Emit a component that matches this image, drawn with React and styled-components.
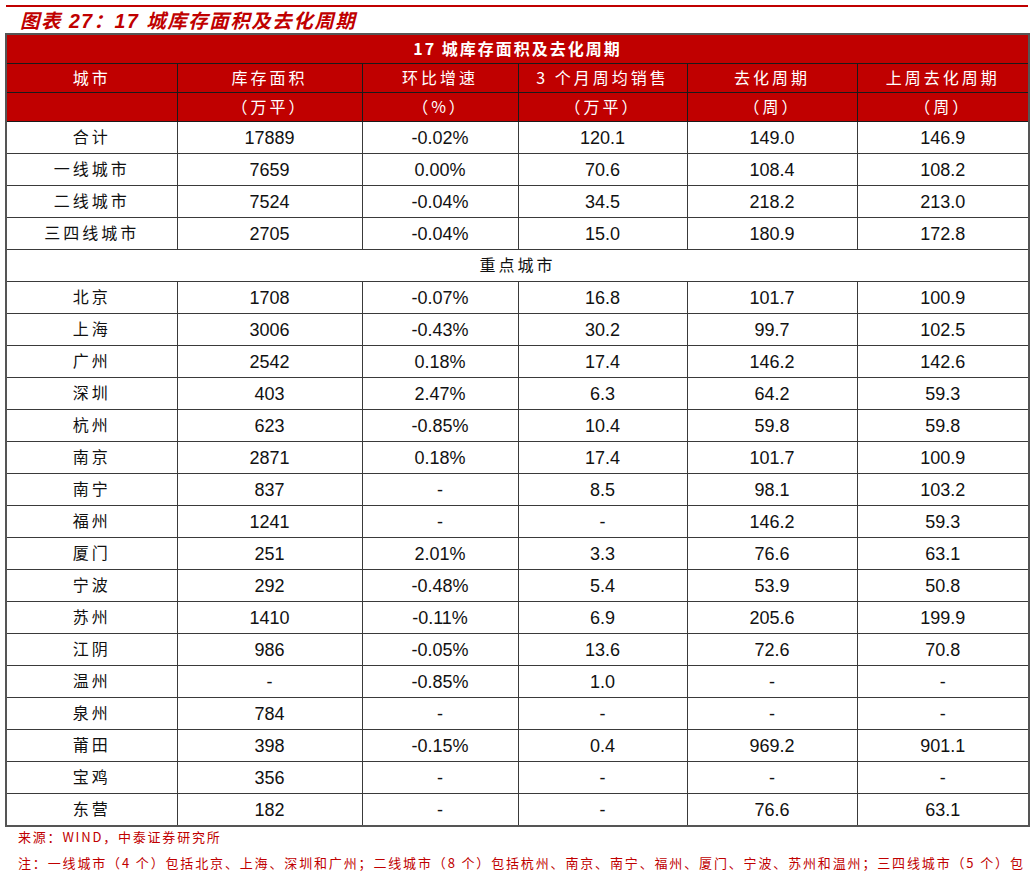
import styled, { createGlobalStyle } from "styled-components";

const GlobalStyle = createGlobalStyle`
    html, body {
        margin: 0;
        padding: 0;
        background: #ffffff;
    }
    body {
        font-family: "Liberation Sans", "Noto Sans CJK SC", sans-serif;
    }
`

const RED = "#c00000";
const CJK = `"Noto Sans CJK SC", "Liberation Sans", sans-serif`;

const Page = styled.div`
    width: 1033px;
    padding: 5px 5px 0 5px;
    box-sizing: border-box;
`
const TopRule = styled.div`
    height: 2px;
    margin: 0 0 0 1px;
    background: ${RED};
`
const Caption = styled.h1`
    margin: 2px 0 0 15px;
    height: 24px;
    font-family: "Liberation Sans", "Noto Sans CJK SC", sans-serif;
    font-style: italic;
    font-weight: 700;
    font-size: 19.5px;
    line-height: 24px;
    color: ${RED};
    letter-spacing: 1.5px;
`
const Table = styled.table`
    width: 1023px;
    border-collapse: collapse;
    table-layout: fixed;
    border: 2px solid #555555;
`
// CJK cells get a small bottom padding so their glyphs sit a bit higher, like the source
const Cell = styled.td`
    height: ${p => (p.$h || 31) - (p.$num ? 0 : 3)}px;
    padding: 0 0 ${p => p.$num ? 0 : 3}px 0;
    border: 1px solid ${p => p.$head ? "#1a1a1a" : "#3a3a3a"};
    text-align: center;
    vertical-align: middle;
    background: ${p => p.$head ? RED : "#ffffff"};
    color: ${p => p.$head ? "#ffffff" : "#111111"};
    font-family: ${p => p.$num ? `"Liberation Sans", sans-serif` : CJK};
    font-size: ${p => p.$num ? 18 : 16}px;
    font-weight: ${p => p.$bold ? 700 : 400};
    letter-spacing: ${p => p.$num ? 0 : p.$bold ? 2 : 3}px;
    line-height: 1;
    white-space: nowrap;
`
const Notes = styled.div`
    padding: 1px 0 0 13px;
    font-family: ${CJK};
    font-size: 13px;
    color: ${RED};
`
const NoteLine = styled.div`
    height: 26px;
    line-height: 18px;
    white-space: nowrap;
    letter-spacing: ${p => p.$ls || 1.85}px;
`

const widths = [171, 185, 156, 169, 170, 172];

const summary = [
    ["合计", "17889", "-0.02%", "120.1", "149.0", "146.9"],
    ["一线城市", "7659", "0.00%", "70.6", "108.4", "108.2"],
    ["二线城市", "7524", "-0.04%", "34.5", "218.2", "213.0"],
    ["三四线城市", "2705", "-0.04%", "15.0", "180.9", "172.8"],
];

const cities = [
    ["北京", "1708", "-0.07%", "16.8", "101.7", "100.9"],
    ["上海", "3006", "-0.43%", "30.2", "99.7", "102.5"],
    ["广州", "2542", "0.18%", "17.4", "146.2", "142.6"],
    ["深圳", "403", "2.47%", "6.3", "64.2", "59.3"],
    ["杭州", "623", "-0.85%", "10.4", "59.8", "59.8"],
    ["南京", "2871", "0.18%", "17.4", "101.7", "100.9"],
    ["南宁", "837", "-", "8.5", "98.1", "103.2"],
    ["福州", "1241", "-", "-", "146.2", "59.3"],
    ["厦门", "251", "2.01%", "3.3", "76.6", "63.1"],
    ["宁波", "292", "-0.48%", "5.4", "53.9", "50.8"],
    ["苏州", "1410", "-0.11%", "6.9", "205.6", "199.9"],
    ["江阴", "986", "-0.05%", "13.6", "72.6", "70.8"],
    ["温州", "-", "-0.85%", "1.0", "-", "-"],
    ["泉州", "784", "-", "-", "-", "-"],
    ["莆田", "398", "-0.15%", "0.4", "969.2", "901.1"],
    ["宝鸡", "356", "-", "-", "-", "-"],
    ["东营", "182", "-", "-", "76.6", "63.1"],
];

const heads = ["城市", "库存面积", "环比增速", "3 个月周均销售", "去化周期", "上周去化周期"];
const units = ["", "（万平）", "（%）", "（万平）", "（周）", "（周）"];

function DataRow({ row }) {
    return (
        <tr>
            {row.map((v, i) => (
                <Cell key={i} $num={i > 0}>{v}</Cell>
            ))}
        </tr>
    )
}

export default function App() {
    return (
        <>
            <GlobalStyle />
            <Page>
                <TopRule />
                <Caption>图表 27：17 城库存面积及去化周期</Caption>
                <Table>
                    <colgroup>
                        {widths.map((w, i) => <col key={i} style={{ width: w }} />)}
                    </colgroup>
                    <thead>
                        <tr>
                            <Cell as="th" colSpan={6} $head $bold $h={28}>17 城库存面积及去化周期</Cell>
                        </tr>
                        <tr>
                            {heads.map((h, i) => <Cell as="th" key={i} $head $h={28}>{h}</Cell>)}
                        </tr>
                        <tr>
                            {units.map((u, i) => <Cell as="th" key={i} $head $h={28}>{u}</Cell>)}
                        </tr>
                    </thead>
                    <tbody>
                        {summary.map((r, i) => <DataRow key={i} row={r} />)}
                        <tr>
                            <Cell colSpan={6}>重点城市</Cell>
                        </tr>
                        {cities.map((r, i) => <DataRow key={i} row={r} />)}
                    </tbody>
                </Table>
                <Notes>
                    <NoteLine $ls={1.8}>来源：WIND，中泰证券研究所</NoteLine>
                    <NoteLine>注：一线城市（4 个）包括北京、上海、深圳和广州；二线城市（8 个）包括杭州、南京、南宁、福州、厦门、宁波、苏州和温州；三四线城市（5 个）包</NoteLine>
                </Notes>
            </Page>
        </>
    )
}
